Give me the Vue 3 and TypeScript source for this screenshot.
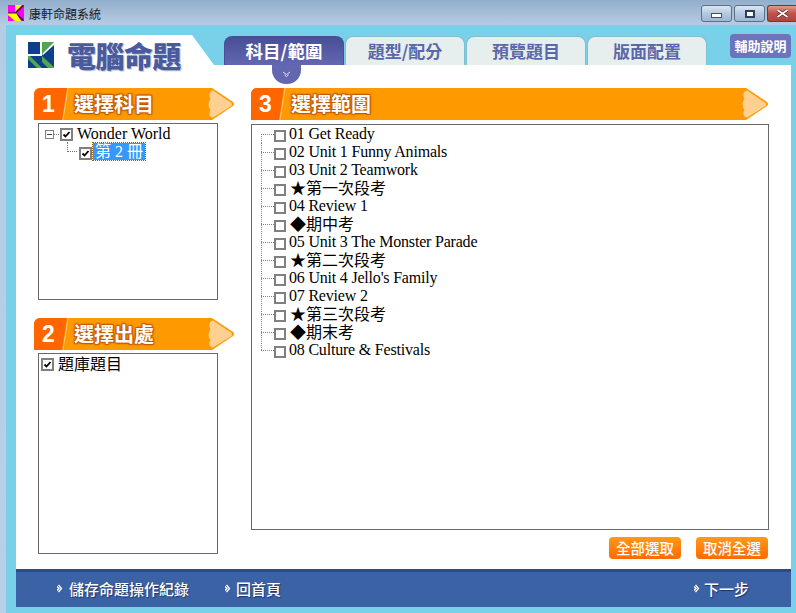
<script setup lang="ts">
interface Row { label: string; sym?: boolean }
const tabs: string[] = ['科目/範圍', '題型/配分', '預覽題目', '版面配置']
const rows: Row[] = [
  { label: '01 Get Ready' },
  { label: '02 Unit 1 Funny Animals' },
  { label: '03 Unit 2 Teamwork' },
  { label: '★第一次段考', sym: true },
  { label: '04 Review 1' },
  { label: '◆期中考', sym: true },
  { label: '05 Unit 3 The Monster Parade' },
  { label: '★第二次段考', sym: true },
  { label: '06 Unit 4 Jello\'s Family' },
  { label: '07 Review 2' },
  { label: '★第三次段考', sym: true },
  { label: '◆期末考', sym: true },
  { label: '08 Culture & Festivals' }
]
</script>

<template>
  <div class="win">
    <div class="titlebar">
      <svg class="appicon" width="16" height="16" viewBox="0 0 16 16">
        <rect width="16" height="16" fill="#ff00ff" />
        <path d="M7 0H14L7 7Z" fill="#ffff00" />
        <path d="M15.500 0.500L7.500 8 15.500 15.500" fill="none" stroke="#222" stroke-width="1.500" />
        <path d="M0 8H8L13 16H7L0 10Z" fill="#ffff00" />
        <path d="M0 8H8" stroke="#222" stroke-width="1" />
      </svg>
      <span class="apptitle">康軒命題系統</span>
      <div class="winbtns">
        <div class="wb"><span class="i-min"></span></div>
        <div class="wb"><span class="i-max"></span></div>
        <div class="wb close">
          <svg width="13" height="9" viewBox="0 0 13 9"><path d="M1.500 1L11.500 8M11.500 1L1.500 8" stroke="#4a1d18" stroke-width="3" /><path d="M1.500 1L11.500 8M11.500 1L1.500 8" stroke="#fff" stroke-width="1.800" /></svg>
        </div>
      </div>
    </div>
    <div class="frame">
      <div class="head">
        <div class="logo">
          <svg width="26" height="26" viewBox="0 0 26 26">
            <rect width="26" height="26" fill="#0c4088" />
            <path d="M12 0h2v12h-2zM0 12h14v2H0z" fill="#fff" />
            <path d="M14 0H26L14 12Z" fill="#4fa84e" />
            <path d="M26 0V3L15 13 14 12Z" fill="#fff" />
            <path d="M14 14L26 25V26H20L14 20Z" fill="#4fa84e" />
            <path d="M0 14H2L14 26H9L0 17Z" fill="#4fa84e" />
          </svg>
          <span class="logotext">電腦命題</span>
        </div>
        <div class="tabs">
          <div v-for="(t, i) in tabs" :key="t" class="tab" :class="{ active: i === 0 }">
            {{ t }}
            <div v-if="i === 0" class="notch">
              <svg width="9" height="7" viewBox="0 0 9 7"><path d="M1 1L4.500 3.500 8 1M2.500 4L4.500 5.500 6.500 4" fill="none" stroke="#dfe0f5" stroke-width="1" /></svg>
            </div>
          </div>
        </div>
        <div class="help">輔助說明</div>
      </div>
      <div class="panel">
        <div class="content">
          <div class="leftcol">
            <div class="banner">
              <div class="num">1</div>
              <div class="btitle">選擇科目</div>
              <svg class="tip" width="26" height="32" viewBox="0 0 26 32"><path d="M0 0H4L25 14Q27 16 25 18L4 32H0Z" fill="#ff9900" /><path d="M5 2.500L23.500 15Q24.500 16.500 23.500 18L5 29.500C2 29.500 0 26 2.500 22 0 19 0 14 2.500 11 0 7 2 3 5 2.500Z" fill="#ffd090" /></svg>
            </div>
            <div class="box box1">
              <div class="t1">
                <span class="expander"></span><span class="dots-h"></span>
                <svg class="cb" width="13" height="13" viewBox="0 0 13 13"><rect x="1" y="1" width="11" height="11" fill="#fff" stroke="#808080" stroke-width="2" /><path d="M3.500 6.500L5.500 8.500 9.500 4" fill="none" stroke="#000" stroke-width="1.800" /></svg>
                <span class="lbl">Wonder World</span>
              </div>
              <div class="t2">
                <span class="elbow"></span>
                <svg class="cb low" width="13" height="13" viewBox="0 0 13 13"><rect x="1" y="1" width="11" height="11" fill="#fff" stroke="#808080" stroke-width="2" /><path d="M3.500 6.500L5.500 8.500 9.500 4" fill="none" stroke="#000" stroke-width="1.800" /></svg>
                <span class="sel">第 2 冊</span>
              </div>
            </div>
            <div class="banner second">
              <div class="num">2</div>
              <div class="btitle">選擇出處</div>
              <svg class="tip" width="26" height="32" viewBox="0 0 26 32"><path d="M0 0H4L25 14Q27 16 25 18L4 32H0Z" fill="#ff9900" /><path d="M5 2.500L23.500 15Q24.500 16.500 23.500 18L5 29.500C2 29.500 0 26 2.500 22 0 19 0 14 2.500 11 0 7 2 3 5 2.500Z" fill="#ffd090" /></svg>
            </div>
            <div class="box box2">
              <div class="t3">
                <svg class="cb" width="13" height="13" viewBox="0 0 13 13"><rect x="1" y="1" width="11" height="11" fill="#fff" stroke="#808080" stroke-width="2" /><path d="M3.500 6.500L5.500 8.500 9.500 4" fill="none" stroke="#000" stroke-width="1.800" /></svg>
                <span class="lbl">題庫題目</span>
              </div>
            </div>
          </div>
          <div class="rightcol">
            <div class="banner">
              <div class="num">3</div>
              <div class="btitle">選擇範圍</div>
              <svg class="tip" width="26" height="32" viewBox="0 0 26 32"><path d="M0 0H4L25 14Q27 16 25 18L4 32H0Z" fill="#ff9900" /><path d="M5 2.500L23.500 15Q24.500 16.500 23.500 18L5 29.500C2 29.500 0 26 2.500 22 0 19 0 14 2.500 11 0 7 2 3 5 2.500Z" fill="#ffd090" /></svg>
            </div>
            <div class="box box3">
              <div v-for="(r, i) in rows" :key="r.label" class="row" :class="{ first: i === 0, last: i === rows.length - 1 }">
                <span class="conn"></span>
                <svg class="cb small" width="12" height="12" viewBox="0 0 12 12"><rect x="1" y="1" width="10" height="10" fill="#fff" stroke="#808080" stroke-width="2" /></svg>
                <span class="lbl" :class="r.sym ? 'sym' : 'latin'">{{ r.label }}</span>
              </div>
            </div>
            <div class="actions">
              <div class="act">全部選取</div>
              <div class="act">取消全選</div>
            </div>
          </div>
        </div>
        <div class="footer">
          <div class="fl first-link">
            <svg class="arrow" width="6" height="9" viewBox="0 0 6 9"><path d="M1.500 1L4.500 4.500 1.500 8M0 2.500L2 4.500 0 6.500" fill="none" stroke="#fff" stroke-width="1.300" /></svg>儲存命題操作紀錄
          </div>
          <div class="fl second-link">
            <svg class="arrow" width="6" height="9" viewBox="0 0 6 9"><path d="M1.500 1L4.500 4.500 1.500 8M0 2.500L2 4.500 0 6.500" fill="none" stroke="#fff" stroke-width="1.300" /></svg>回首頁
          </div>
          <div class="fl next">
            <svg class="arrow" width="6" height="9" viewBox="0 0 6 9"><path d="M1.500 1L4.500 4.500 1.500 8M0 2.500L2 4.500 0 6.500" fill="none" stroke="#fff" stroke-width="1.300" /></svg>下一步
          </div>
        </div>
      </div>
    </div>
  </div>
</template>

<style>
html, body { margin: 0; padding: 0; overflow: hidden; }
</style>

<style scoped>
.win {
  width: 796px;
  height: 613px;
  display: flex;
  flex-direction: column;
  background: linear-gradient(#93aecb 0, #b6cce5 25px, #b9d0ea 100%);
  font-family: "Liberation Serif", "Noto Sans CJK TC", serif;
  overflow: hidden;
}
.titlebar {
  height: 25px;
  flex: none;
  display: flex;
  align-items: flex-start;
  padding-left: 8px;
}
.appicon { margin-top: 5px; }
.apptitle {
  margin: 5px 0 0 5px;
  font: 12px/18px "Noto Sans CJK TC", sans-serif;
  color: #1a1a1a;
}
.winbtns { margin-left: auto; display: flex; gap: 2px; padding-top: 5px; }
.wb {
  width: 29px;
  height: 15px;
  border: 1px solid #5f6f84;
  border-radius: 3px;
  background: linear-gradient(#dbe6f2, #b4c9e1 50%, #9db6d3);
  display: flex;
  align-items: center;
  justify-content: center;
}
.wb.close { width: 28px; border-right: 0; border-radius: 3px 0 0 3px; border-color: #6e3a36; background: linear-gradient(#e09a8e, #c1524a 50%, #b0433c); }
.i-min { display: block; width: 9px; height: 3px; margin-top: 4px; background: #fff; border: 1px solid #3f4f66; }
.i-max { display: block; width: 6px; height: 4px; background: #fff; border: 2px solid #2f3f56; }
.frame {
  flex: 1;
  margin-left: 6px;
  padding: 10px 5px 6px 10px;
  background: #78d1e8;
  display: flex;
  flex-direction: column;
  min-height: 0;
}
.head { height: 30px; flex: none; display: flex; position: relative; }
.logo {
  width: 198px;
  height: 30px;
  flex: none;
  display: flex;
  align-items: flex-start;
  padding: 7px 0 0 12px;
  box-sizing: border-box;
  gap: 13px;
  position: relative;
  z-index: 1;
}
.logo::before {
  content: "";
  position: absolute;
  inset: 0;
  background: #fff;
  clip-path: polygon(0 0, 176px 0, 198px 30px, 0 30px);
  z-index: -1;
}
.logo svg { flex: none; }
.logotext {
  font: 900 29px/26px "Noto Sans CJK TC", sans-serif;
  color: #4a5a9c;
  letter-spacing: -0.5px;
  white-space: nowrap;
  text-shadow: 1px 1px 0 #c3c9e2;
}
.tabs { display: flex; gap: 1px; margin: 1px 0 0 10px; }
.tab {
  width: 120px;
  height: 29px;
  box-sizing: border-box;
  border-radius: 8px 8px 0 0;
  background: #e6eeee;
  border: 1px solid #7cc0d6;
  border-bottom: 0;
  color: #5a67a8;
  font: 700 17px/28px "Noto Sans CJK TC", sans-serif;
  text-align: center;
  position: relative;
}
.tab.active {
  background: linear-gradient(#474f97, #6367b0);
  border-color: #474f97;
  color: #fff;
  font-size: 17.500px;
}
.notch {
  position: absolute;
  left: 47px;
  top: 28px;
  width: 29px;
  height: 19px;
  background: #6367b0;
  border-radius: 0 0 14px 14px;
  display: flex;
  align-items: center;
  justify-content: center;
  z-index: 2;
}
.help {
  position: absolute;
  right: 0;
  top: -1px;
  width: 61px;
  height: 24px;
  border-radius: 4px;
  background: #6c74bc;
  color: #fff;
  font: 700 13px/24px "Noto Sans CJK TC", sans-serif;
  text-align: center;
}
.panel {
  flex: 1;
  background: #fff;
  display: flex;
  flex-direction: column;
  min-height: 0;
}
.content { flex: 1; display: flex; padding: 23px 0 0 18px; min-height: 0; }
.leftcol { width: 200px; flex: none; display: flex; flex-direction: column; }
.rightcol { width: 517px; margin-left: 17px; flex: none; display: flex; flex-direction: column; }
.banner { height: 32px; flex: none; display: flex; position: relative; background: #ff9900; border-radius: 6px 0 0 0; overflow: hidden; }
.banner::after {
  content: "";
  position: absolute;
  left: 31px;
  top: 0;
  width: 1px;
  height: 32px;
  background: #ffc878;
  transform: skewX(-9deg);
}
.second { margin-top: 18px; }
.num {
  width: 33px;
  height: 32px;
  flex: none;
  box-sizing: border-box;
  padding-left: 8px;
  background: #ff6600;
  clip-path: polygon(0 0, 100% 0, 28px 100%, 0 100%);
  color: #fff;
  font: 700 23px/32px "Liberation Sans", sans-serif;
}
.btitle {
  flex: 1;
  margin-left: 7px;
  color: #fff;
  font: 700 20px/31px "Noto Sans CJK TC", sans-serif;
  text-shadow: 0 0 3px #c45c00, 1px 1px 1px #c45c00, -1px -1px 1px #c45c00, 1px -1px 1px #c45c00, -1px 1px 1px #c45c00;
}
.tip { flex: none; background: #fff; }
.box {
  box-sizing: border-box;
  border: 1px solid #696969;
  background: #fff;
  margin-left: 4px;
  width: 180px;
}
.box1 { height: 177px; margin-top: 3px; padding: 1px 0 0 5px; }
.box2 { height: 201px; margin-top: 3px; padding: 1px 0 0 2px; }
.box3 { width: 518px; margin-left: 0; height: 406px; margin-top: 4px; padding: 0 0 0 9px; }
.t1, .t2, .t3, .row { display: flex; align-items: center; height: 18px; font-size: 16px; color: #000; white-space: nowrap; }
.expander { width: 9px; height: 9px; margin-left: 1px; box-sizing: border-box; border: 1px solid #808080; background: linear-gradient(#444, #444) center / 5px 1px no-repeat; flex: none; }
.dots-h { width: 5px; height: 1px; background: repeating-linear-gradient(to right, #888 0 1px, transparent 1px 2px); flex: none; margin-right: 1px; }
.cb { flex: none; }
.lbl { margin-left: 4px; }
.t3 .lbl { margin-bottom: 2px; }
.t2 { padding-left: 23px; }
.elbow { width: 10px; height: 10px; flex: none; margin: 0 2px 10px 0; border-left: 1px dotted #777; border-bottom: 1px dotted #777; box-sizing: border-box; }
.cb.low { margin-top: 2px; }
.sel {
  margin: 0 0 2px 1px;
  padding: 0 2px;
  height: 17px;
  line-height: 17px;
  background: #3399ff;
  color: #fff;
  outline: 1px dotted #a05a00;
  font-size: 16px;
}
.conn {
  width: 13px;
  height: 18px;
  flex: none;
  background-image: repeating-linear-gradient(to bottom, #888 0 1px, transparent 1px 2px), repeating-linear-gradient(to right, #888 0 1px, transparent 1px 2px);
  background-size: 1px 100%, 100% 1px;
  background-position: 0 0, 0 9px;
  background-repeat: no-repeat;
}
.row.first .conn { background-size: 1px 9px, 100% 1px; background-position: 0 9px, 0 9px; }
.row.last .conn { background-size: 1px 9px, 100% 1px; background-position: 0 0, 0 9px; }
.cb.small { margin: 3px 3px 0 0; }
.row .lbl { margin-left: 0; }
.row .latin { letter-spacing: -0.2px; }
.row .sym { margin: 0 0 3px 1px; }
.actions { display: flex; justify-content: flex-end; gap: 15px; padding: 7px 0 0 0; }
.act {
  width: 72px;
  height: 22px;
  border-radius: 4px;
  background: linear-gradient(#ff9a1a, #ff6a00);
  color: #fff;
  text-align: center;
  font: 500 14.500px/22px "Noto Sans CJK TC", sans-serif;
}
.footer {
  flex: none;
  height: 38px;
  box-sizing: border-box;
  background: #3c62a6;
  border-top: 3px solid #2c4a86;
  padding-bottom: 2px;
  display: flex;
  align-items: center;
  color: #fff;
  font: 500 15px/30px "Noto Sans CJK TC", sans-serif;
  text-shadow: 1px 1px 1px #1d3566;
}
.fl { display: flex; align-items: center; white-space: nowrap; }
.arrow { margin-right: 6px; flex: none; }
.first-link { margin-left: 41px; }
.second-link { margin-left: 36px; }
.second-link .arrow { margin-right: 5px; }
.next { margin-left: auto; margin-right: 42px; }
.next .arrow { margin-right: 4px; }
</style>
